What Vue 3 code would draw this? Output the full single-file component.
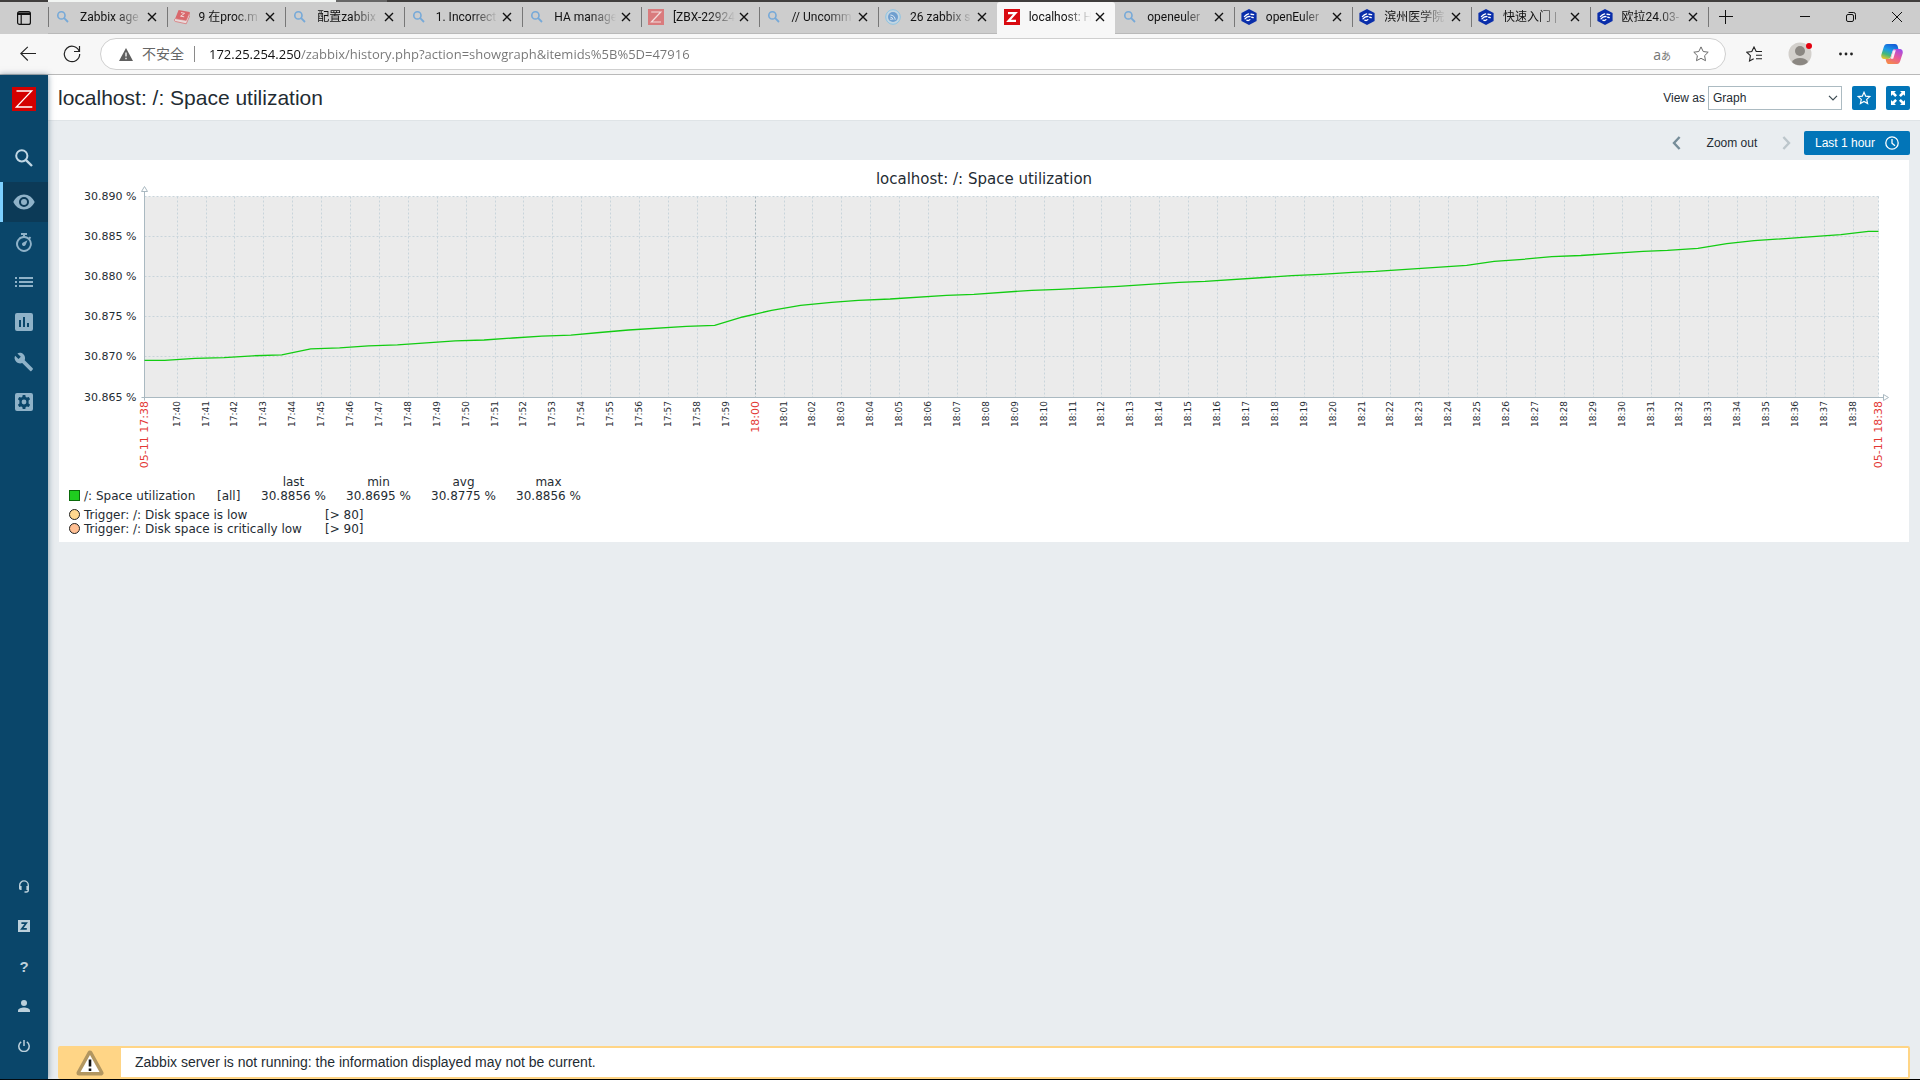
<template>
  <div class="browser">
    <div class="top-edge">
      <span class="edge-light"></span>
      <span class="edge-mid"></span>
    </div>

    <div class="tab-strip">
      <button class="tab-actions" aria-label="标签页操作">
        <svg width="16" height="16" viewBox="0 0 16 16" fill="none" stroke="#111" stroke-width="1.2">
          <rect x="1.6" y="1.6" width="12.8" height="12.8" rx="2" />
          <path d="M2 3.2h12M2 4.4h12M5.2 5v9" />
        </svg>
      </button>
      <div class="tabs">
        <div
          v-for="(tab, index) in tabs"
          :key="index"
          :class="['tab', { active: index === activeTab, plain: index === activeTab + 1 }]"
        >
          <svg v-if="tab.icon === 'search'" class="favicon" viewBox="0 0 16 16" fill="none" stroke="#76a9d8" stroke-width="1.6">
            <circle cx="6.4" cy="6.4" r="3.6" />
            <path d="M9.2 9.2l3.8 3.8" stroke-width="1.8" />
          </svg>
          <svg v-else-if="tab.icon === 'book'" class="favicon" viewBox="0 0 16 16">
            <path d="M4.6 1l11 2-3.4 8.4-11-1.8z" fill="#d9686c" />
            <path d="M1.2 9.6l11 1.8 3.4-8 .2 3.4-3.6 8-11-2.4c-1.300-.6-1-2.200 0-2.800z" fill="#e9dada" stroke="#d9686c" stroke-width=".7" />
            <path d="M7 3.600l3.600.7-4 2.900 3.600.6" fill="none" stroke="#f1d5d5" />
          </svg>
          <svg v-else-if="tab.icon === 'zdim'" class="favicon" viewBox="0 0 16 16">
            <rect width="16" height="16" fill="#d97b7d" />
            <path d="M3.200 3h9.600L3.400 13h9.600" fill="none" stroke="#f3dede" stroke-width="1.200" />
          </svg>
          <svg v-else-if="tab.icon === 'z'" class="favicon" viewBox="0 0 16 16">
            <rect width="16" height="16" fill="#d90a10" />
            <path d="M4 4.200h7.400l-6.800 7.600H12" fill="none" stroke="#fff" stroke-width="2.200" />
          </svg>
          <svg v-else-if="tab.icon === 'feed'" class="favicon" viewBox="0 0 16 16">
            <circle cx="8" cy="8" r="7.300" fill="#c4d6e2" stroke="#8cc4e4" stroke-width="1" />
            <circle cx="8" cy="8" r="5" fill="#6f9fcf" />
            <g fill="none" stroke="#dce8f3" stroke-width="1">
              <path d="M5.400 8.200a2.600 2.600 0 0 1 2.600 2.600M5.400 6a4.800 4.800 0 0 1 4.800 4.800" />
            </g>
            <circle cx="6" cy="10.200" r=".8" fill="#dce8f3" />
          </svg>
          <svg v-else class="favicon" viewBox="0 0 16 16">
            <path d="M8 0l7.600 4v8L8 16 .4 12V4z" fill="#0a2eaa" />
            <g fill="none" stroke="#fff" stroke-linecap="round">
              <path d="M3.400 7.600c1.200-1.500 2.500-2.400 4.200-2.800" stroke-width="1.300" />
              <path d="M4 9.800c1.400-1.800 3-2.600 5-2.200M5.800 11.200c1 .5 2.200.3 3-.6" stroke-width="1.300" />
              <path d="M10 5.200l2.600.4M10.800 8.300l1.400.3" stroke-width="1.400" />
            </g>
          </svg>
          <span class="tab-title">{{ tab.title }}</span>
          <button class="tab-close" :aria-label="'关闭 ' + tab.title">
            <svg width="10" height="10" viewBox="0 0 10 10" stroke="#111" stroke-width="1.400">
              <path d="M1 1l8 8M9 1l-8 8" />
            </svg>
          </button>
        </div>
      </div>
      <div class="window-area">
        <button class="new-tab" aria-label="新建标签页">
          <svg width="14" height="14" viewBox="0 0 14 14" stroke="#111" stroke-width="1">
            <path d="M0 6.500h14M6.500 0v14" />
          </svg>
        </button>
        <div class="window-buttons">
          <button aria-label="最小化">
            <svg width="10" height="10" viewBox="0 0 10 10" stroke="#111"><path d="M0 4.500h10" /></svg>
          </button>
          <button aria-label="还原">
            <svg width="10" height="10" viewBox="0 0 10 10" fill="none" stroke="#111">
              <rect x=".5" y="2.500" width="7" height="7" rx="1.500" />
              <path d="M2.500 .5h5a2 2 0 0 1 2 2v5" />
            </svg>
          </button>
          <button aria-label="关闭">
            <svg width="10" height="10" viewBox="0 0 10 10" stroke="#111"><path d="M0 0l10 10M10 0L0 10" /></svg>
          </button>
        </div>
      </div>
    </div>

    <div class="toolbar">
      <button aria-label="后退">
        <svg width="16" height="16" viewBox="0 0 16 16" fill="none" stroke="#222" stroke-width="1.100">
          <path d="M16 7.500H.8M7.800 .8L.8 7.500l7 7" />
        </svg>
      </button>
      <button aria-label="刷新">
        <svg width="18" height="18" viewBox="0 0 18 18" fill="none" stroke="#222" stroke-width="1.200">
          <path d="M16.300 6.500A7.700 7.700 0 1 0 16.700 9M16.500 1v5.500H11" />
        </svg>
      </button>
      <div class="address-bar">
        <svg width="14" height="13" viewBox="0 0 14 13">
          <path d="M7 0l7 13H0z" fill="#5f5f5f" />
          <path d="M7 4.500v4M7 9.800v1.500" stroke="#fff" stroke-width="1.300" />
        </svg>
        <span class="insecure">不安全</span>
        <input v-model="address" class="address" type="text" aria-label="地址栏">
        <span class="translate">a<small>あ</small></span>
        <button class="favorite" aria-label="收藏">
          <svg width="16" height="16" viewBox="0 0 16 16" fill="none" stroke="#6b6b6b" stroke-width="1">
            <path d="M8 .9l2.200 4.600 5 .7-3.600 3.500.9 5L8 12.300l-4.500 2.400.9-5L.8 6.200l5-.7z" />
          </svg>
        </button>
      </div>
      <div class="toolbar-buttons">
        <button aria-label="收藏夹">
          <svg width="17" height="16" viewBox="0 0 17 16" fill="none" stroke="#222" stroke-width="1.100">
            <path d="M10.500 5.500l-.3 0L8 1 5.800 5.500l-5 .7 3.600 3.500-.9 5.200 4.200-2.200M10.500 5.500H16M10 9.200h6M10 12.800h6" />
          </svg>
        </button>
        <button aria-label="用户">
          <svg width="24" height="24" viewBox="0 0 24 24">
            <circle cx="12" cy="12" r="11.500" fill="#d3d0cc" />
            <circle cx="12" cy="9" r="5" fill="#8b8782" />
            <path d="M4 20a8.500 6 0 0 1 16 0 11.500 11.500 0 0 1-16 0z" fill="#8b8782" />
            <circle cx="21" cy="4" r="3" fill="#e3000f" />
          </svg>
        </button>
        <button aria-label="更多">
          <svg width="14" height="4" viewBox="0 0 14 4" fill="#222">
            <circle cx="1.500" cy="2" r="1.400" /><circle cx="7" cy="2" r="1.400" /><circle cx="12.500" cy="2" r="1.400" />
          </svg>
        </button>
        <button aria-label="Copilot">
          <svg width="22" height="22" viewBox="0 0 22 22">
            <defs>
              <linearGradient id="cool" x1="0.600" y1="0" x2="0.200" y2="1">
                <stop offset="0" stop-color="#1560d8" /><stop offset=".4" stop-color="#1c9be8" />
                <stop offset=".7" stop-color="#44b87a" /><stop offset="1" stop-color="#e9c52c" />
              </linearGradient>
              <linearGradient id="warm" x1="0.800" y1="0" x2="0.300" y2="1">
                <stop offset="0" stop-color="#a04be8" /><stop offset=".5" stop-color="#e8589b" />
                <stop offset="1" stop-color="#f58a4b" />
              </linearGradient>
            </defs>
            <path d="M6 1h8c1.600 0 2.400 1.200 2.800 2.600L17.400 6h-3c-2 0-2.600 1-3.200 3l-1.400 4.500c-.6 1.800-1.500 2.500-3 2.500H3C.8 16-.2 14 .4 11.500L2.800 4C3.400 2 4.400 1 6 1z" fill="url(#cool)" />
            <path d="M16 21H8c-1.600 0-2.400-1.200-2.800-2.600L4.600 16h2.600c2 0 2.600-1 3.200-3l1.400-4.500C12.400 6.700 13.300 6 14.800 6H19c2.200 0 3.200 2 2.600 4.500L19.200 18c-.6 2-1.600 3-3.200 3z" fill="url(#warm)" />
            <path d="M12.300 7.200h2.500l-2.600 8.500H9.700z" fill="#fff" opacity=".9" />
          </svg>
        </button>
      </div>
    </div>

    <div class="page">
      <aside class="sidebar">
        <a class="logo" href="#" aria-label="Zabbix">
          <svg width="24" height="24" viewBox="0 0 24 24">
            <rect width="24" height="24" fill="#d40000" />
            <path d="M4.500 4h15.200L4.300 20h16" fill="none" stroke="#fff" stroke-width="1.300" />
          </svg>
        </a>
        <button class="search" aria-label="Search">
          <svg width="18" height="18" viewBox="0 0 18 18" fill="none" stroke="#c1d7e4" stroke-width="2">
            <circle cx="6.800" cy="6.800" r="5.600" />
            <path d="M10.800 10.800l6.200 6.200" stroke-width="2.400" />
          </svg>
        </button>
        <nav class="menu">
          <a v-for="item in menu" :key="item.name" href="#" :class="{ selected: item.selected }" :aria-label="item.name">
            <svg width="24" height="24" viewBox="0 0 24 24"><path :d="item.path" fill="#8fb2c8" fill-rule="evenodd" /></svg>
          </a>
        </nav>
        <nav class="menu user-menu">
          <a href="#" aria-label="Support">
            <svg width="12" height="13" viewBox="0 0 12 13">
              <path d="M1.700 7V5.200a4.300 4.300 0 0 1 8.600 0V10c0 1.400-.8 2-2 2H6.500" fill="none" stroke="#bcd0db" stroke-width="1.400" />
              <path d="M1 6h2.600v4H2.400A1.400 1.400 0 0 1 1 8.600zM11 6H8.400v4H11z" fill="#bcd0db" />
            </svg>
          </a>
          <a href="#" aria-label="Integrations">
            <svg width="12" height="12" viewBox="0 0 12 12">
              <rect width="12" height="12" fill="#bcd0db" />
              <path d="M3.400 3.200h4.800L3.800 8.900h5" fill="none" stroke="#0a466a" stroke-width="1.700" />
            </svg>
          </a>
          <a class="help" href="#" aria-label="Help">?</a>
          <a href="#" aria-label="User settings">
            <svg width="12" height="12" viewBox="0 0 12 12" fill="#bcd0db">
              <circle cx="6" cy="3" r="3" />
              <path d="M0 12v-1.400C0 8.700 3.500 7.600 6 7.600s6 1.100 6 3V12z" />
            </svg>
          </a>
          <a href="#" aria-label="Sign out">
            <svg width="12" height="12" viewBox="0 0 12 12" fill="none" stroke="#bcd0db" stroke-width="1.500">
              <path d="M3.200 1.900a5.200 5.200 0 1 0 5.600 0M6 0v6" />
            </svg>
          </a>
        </nav>
      </aside>

      <div class="content">
        <header class="header">
          <h1>localhost: /: Space utilization</h1>
          <div class="header-controls">
            <label for="view-as">View as</label>
            <div class="select-box">
              <select id="view-as" v-model="viewAs">
                <option>Graph</option>
                <option>Values</option>
                <option>500 latest values</option>
              </select>
              <svg width="10" height="6" viewBox="0 0 10 6" fill="none" stroke="#3c4a52" stroke-width="1.200"><path d="M1 .8l4 4 4-4" /></svg>
            </div>
            <button class="square-button" aria-label="Add to favorites">
              <svg width="14" height="14" viewBox="0 0 14 14" fill="none" stroke="#fff" stroke-width="1.200">
                <path d="M7 1.300l1.700 3.900 4.100.4-3.100 2.800.9 4.200L7 10.500l-3.600 2.100.9-4.200L1.200 5.600l4.100-.4z" />
              </svg>
            </button>
            <button class="square-button" aria-label="Kiosk mode">
              <svg width="14" height="14" viewBox="0 0 14 14" fill="#fff">
                <path d="M0 0h5L3.400 1.600 6 4.200 4.200 6 1.600 3.400 0 5zM14 0v5l-1.600-1.600L9.800 6 8 4.200l2.600-2.600L9 0zM0 14V9l1.600 1.600L4.200 8 6 9.800l-2.600 2.600L5 14zM14 14H9l1.600-1.600L8 9.800 9.800 8l2.600 2.600L14 9z" />
              </svg>
            </button>
          </div>
        </header>

        <main>
          <div class="time-filter">
            <button class="step" aria-label="Previous period">
              <svg width="9" height="14" viewBox="0 0 9 14" fill="none" stroke="#768d99" stroke-width="2.400"><path d="M7.600 1L2 7l5.600 6" /></svg>
            </button>
            <button class="zoom-out">Zoom out</button>
            <button class="step" aria-label="Next period" disabled>
              <svg width="9" height="14" viewBox="0 0 9 14" fill="none" stroke="#bcc6cb" stroke-width="2.400"><path d="M1.400 1L7 7l-5.600 6" /></svg>
            </button>
            <button class="period">
              Last 1 hour
              <svg width="14" height="14" viewBox="0 0 14 14" fill="none" stroke="#fff" stroke-width="1.300">
                <circle cx="7" cy="7" r="6.200" /><path d="M7 3v4.200l3 2.600" />
              </svg>
            </button>
          </div>

          <section ref="card" class="card">
            <svg class="chart" :width="width" height="315" role="img" aria-label="localhost: /: Space utilization">
              <text class="chart-title" :x="width / 2" y="24">localhost: /: Space utilization</text>
              <rect :x="left" :y="top" :width="plotWidth" :height="plotHeight" fill="#ebebeb" />
              <g class="grid">
                <path v-for="row in rows" :key="row.label" :d="`M${left} ${row.y}H${right}`" />
                <path
                  v-for="tick in ticks"
                  :key="tick.x"
                  :class="{ main: tick.main }"
                  :d="`M${tick.x} ${top}V${bottom}`"
                />
                <path :d="`M${right} ${top}V${bottom}`" />
              </g>
              <g class="axis">
                <path :d="`M${left} ${top - 5}V${bottom + 3}M${left - 3} ${bottom}H${right + 5}`" />
                <path fill="#fff" :d="`M${left - 3} ${top - 5}h6l-3 -5z`" />
                <path fill="#fff" :d="`M${right + 5} ${bottom - 3}v6l5 -3z`" />
              </g>
              <polyline class="series" :points="points" />
              <text v-for="row in rows" :key="row.label" class="y-label" :x="left - 8" :y="row.y + 3">{{ row.label }}</text>
              <text
                v-for="tick in ticks"
                :key="tick.x"
                :class="['x-label', { red: tick.main }]"
                :transform="`translate(${tick.x + (tick.main ? 3 : 2)} 241) rotate(-90)`"
              >{{ tick.label }}</text>
              <text class="x-label red" :transform="`translate(${left + 3} 241) rotate(-90)`">05-11 17:38</text>
              <text class="x-label red" :transform="`translate(${right + 3} 241) rotate(-90)`">05-11 18:38</text>
            </svg>

            <table class="legend">
              <thead>
                <tr>
                  <td class="name"></td>
                  <td class="scope"></td>
                  <th v-for="(value, key) in stats" :key="key">{{ key }}</th>
                </tr>
              </thead>
              <tbody>
                <tr>
                  <td class="name"><span class="swatch"></span>/: Space utilization</td>
                  <td class="scope">[all]</td>
                  <td v-for="(value, key) in stats" :key="key" class="value">{{ value }}</td>
                </tr>
              </tbody>
            </table>
            <table class="legend triggers">
              <tbody>
                <tr v-for="trigger in triggers" :key="trigger.name">
                  <td class="trigger-name"><span :class="['dot', trigger.severity]"></span>Trigger: {{ trigger.name }}</td>
                  <td>{{ trigger.condition }}</td>
                </tr>
              </tbody>
            </table>
          </section>

          <div class="server-warning" role="status">
            <div class="warning-icon">
              <svg width="28" height="26" viewBox="0 0 28 26">
                <path d="M14 3L25 23H3z" fill="#fff" stroke="#b29660" stroke-width="5" stroke-linejoin="round" />
                <path d="M14 5L23.500 22h-19z" fill="#fff" />
                <path d="M14 9.500v7M14 18.500v2.500" stroke="#111" stroke-width="2.600" />
              </svg>
            </div>
            <output>Zabbix server is not running: the information displayed may not be current.</output>
          </div>
        </main>
      </div>
    </div>
  </div>
</template>

<script setup>
import { ref, computed, onMounted, onUnmounted } from 'vue'

const address = ref('172.25.254.250/zabbix/history.php?action=showgraph&itemids%5B%5D=47916')
const viewAs = ref('Graph')
const activeTab = 8

const tabs = [
  { icon: 'search', title: 'Zabbix age' },
  { icon: 'book', title: '9 在proc.m' },
  { icon: 'search', title: '配置zabbix' },
  { icon: 'search', title: '1. Incorrect' },
  { icon: 'search', title: 'HA manage' },
  { icon: 'zdim', title: '[ZBX-22924' },
  { icon: 'search', title: '// Uncomm' },
  { icon: 'feed', title: '26 zabbix s' },
  { icon: 'z', title: 'localhost: H' },
  { icon: 'search', title: 'openeuler' },
  { icon: 'euler', title: 'openEuler' },
  { icon: 'euler', title: '滨州医学院' },
  { icon: 'euler', title: '快速入门 |' },
  { icon: 'euler', title: '欧拉24.03-' }
]

const menu = [
  {
    name: 'Monitoring',
    selected: true,
    path: 'M12 4.500C7.400 4.500 3.300 7.600 1.300 12c2 4.400 6.100 7.500 10.700 7.500s8.700-3.100 10.700-7.500c-2-4.400-6.100-7.500-10.700-7.500zM12 17a5 5 0 1 1 0-10 5 5 0 0 1 0 10zm0-8a3 3 0 1 0 0 6 3 3 0 0 0 0-6z'
  },
  {
    name: 'Services',
    path: 'M9 3h6v2h-2v1.100c1.400.2 2.600.7 3.700 1.500l1.200-1.200 1.300 1.300-1.100 1.300A7.900 7.900 0 1 1 11 6.100V5H9zM12 8a6 6 0 1 0 0 12 6 6 0 0 0 0-12zM15.500 10.200l-1.800 4.600a1.900 1.900 0 1 1-2.600-2.400z'
  },
  {
    name: 'Inventory',
    path: 'M3 7h2v2H3zM7 7h14v2H7zM3 11h2v2H3zM7 11h14v2H7zM3 15h2v2H3zM7 15h14v2H7z'
  },
  {
    name: 'Reports',
    path: 'M5 3h14a2 2 0 0 1 2 2v14a2 2 0 0 1-2 2H5a2 2 0 0 1-2-2V5a2 2 0 0 1 2-2zM7 10v7h2v-7zM11 7v10h2V7zM15 13v4h2v-4z'
  },
  {
    name: 'Data collection',
    path: 'M20.700 18.300l-8-8c.8-2.100.3-4.400-1.300-6C9.700 2.600 7.200 2.500 5.400 3.400l3.400 3.300-2.300 2.400L3.100 5.800c-1 1.800-.6 4.300 1.100 6 1.600 1.600 4 2 6 1.200l8 8c.3.400.9.400 1.200 0l1.300-1.500c.4-.3.4-.8 0-1.200z'
  },
  {
    name: 'Administration',
    path: 'M5 3h14a2 2 0 0 1 2 2v14a2 2 0 0 1-2 2H5a2 2 0 0 1-2-2V5a2 2 0 0 1 2-2zM10.700 5l-.4 1.900-1.200.7-1.900-.7-1.300 2.300 1.500 1.300v3l-1.500 1.300 1.300 2.300 1.900-.7 1.200.7.4 1.900h2.600l.4-1.900 1.200-.7 1.900.7 1.300-2.300-1.500-1.300v-3l1.500-1.300-1.300-2.300-1.900.7-1.200-.7-.4-1.900zM12 9.600a2.400 2.400 0 1 1 0 4.800 2.400 2.400 0 0 1 0-4.800z'
  }
]

const stats = { last: '30.8856 %', min: '30.8695 %', avg: '30.8775 %', max: '30.8856 %' }

const triggers = [
  { name: '/: Disk space is low', condition: '[> 80]', severity: 'warning' },
  { name: '/: Disk space is critically low', condition: '[> 90]', severity: 'average' }
]

// [minutes since 17:38:52, used space in %]
const history = [
  [0, 30.86963], [0.7, 30.86963], [1.75, 30.86988], [2.75, 30.86996], [3.75, 30.87019], [4.75, 30.87031],
  [5.75, 30.87106], [6.75, 30.87118], [7.75, 30.87143], [8.75, 30.87155], [9.75, 30.8718], [10.75, 30.87204],
  [11.75, 30.87215], [12.75, 30.8724], [13.75, 30.87264], [14.75, 30.87275], [15.75, 30.87308], [16.75, 30.8734],
  [18.75, 30.87386], [19.73, 30.87398], [20.7, 30.87501], [21.7, 30.87585], [22.7, 30.87647], [23.77, 30.87684],
  [24.7, 30.87709], [25.8, 30.87725], [27.75, 30.87771], [28.7, 30.87784], [30.7, 30.87833], [31.65, 30.87846],
  [33.7, 30.87883], [35.8, 30.87933], [36.7, 30.87945], [39.7, 30.88015], [40.7, 30.88032], [41.8, 30.88057],
  [42.6, 30.88068], [45.75, 30.88144], [46.7, 30.88194], [47.7, 30.88219], [48.7, 30.88251], [49.7, 30.88266],
  [51.85, 30.88318], [52.7, 30.88331], [53.75, 30.88356], [54.75, 30.88413], [55.7, 30.8845], [58.7, 30.88525],
  [59.65, 30.88567], [60, 30.88567]
]

const card = ref(null)
const width = ref(1850)

const left = 85.5
const top = 36.5
const bottom = 237.5
const plotHeight = bottom - top
const right = computed(() => width.value - 30.5)
const plotWidth = computed(() => right.value - left)

const xAt = minutes => left + (minutes / 60) * plotWidth.value
const yAt = value => top + ((30.89 - value) / 0.025) * plotHeight

const points = computed(() => history.map(([m, v]) => `${xAt(m).toFixed(1)},${yAt(v).toFixed(1)}`).join(' '))

const labels = ['30.890 %', '30.885 %', '30.880 %', '30.875 %', '30.870 %', '30.865 %']
const rows = labels.map((label, i) => ({
  label,
  y: i === labels.length - 1 ? bottom : top + i * 40
}))

const ticks = computed(() => {
  const list = []
  for (let i = 0; i < 59; i++) {
    const total = 17 * 60 + 40 + i
    list.push({
      x: Math.floor(xAt(i + 1.13)) + 0.5,
      main: total % 60 === 0,
      label: `${Math.floor(total / 60)}:${String(total % 60).padStart(2, '0')}`
    })
  }
  return list
})

const measure = () => {
  width.value = card.value.clientWidth
}

onMounted(() => {
  measure()
  window.addEventListener('resize', measure)
})

onUnmounted(() => {
  window.removeEventListener('resize', measure)
})
</script>

<style>
body {
  margin: 0;
  background: #e9edf0;
}
</style>

<style scoped>
.browser {
  display: flex;
  flex-direction: column;
  min-height: 100vh;
  box-sizing: border-box;
  border-bottom: 1px solid #000;
  font-family: Arial, "Liberation Sans", sans-serif;
  font-size: 12px;
  color: #1f2c33;
}

button {
  display: flex;
  align-items: center;
  justify-content: center;
  padding: 0;
  border: 0;
  background: none;
  font: inherit;
  color: inherit;
  cursor: pointer;
}

svg {
  flex: none;
}

.top-edge {
  display: flex;
  height: 2px;
  padding-left: 48px;
  background: #403e3d;
}

.edge-light {
  width: 288px;
  background: #f2f5f3;
}

.edge-mid {
  width: 51px;
  background: #666;
}

.tab-strip {
  display: flex;
  height: 32px;
  background: #cdcdcd;
  font-family: Roboto, "Noto Sans CJK SC", sans-serif;
  color: #111;
}

.tab-actions {
  width: 48px;
}

.tabs {
  display: flex;
  flex: 1;
  min-width: 0;
}

.tab {
  display: flex;
  flex: 1 1 0;
  align-items: center;
  min-width: 0;
  box-sizing: border-box;
  padding: 0 10px 2px 7px;
  border-bottom: 1px solid #b9b9b9;
  background: linear-gradient(#777, #777) 0 5px / 1px 20px no-repeat;
}

.tab.plain {
  background: none;
}

.tab.active {
  border-bottom-color: #f7f7f7;
  border-radius: 3px 3px 0 0;
  background: #f7f7f7;
}

.favicon {
  width: 16px;
  height: 16px;
}

.tab-title {
  flex: 1;
  min-width: 0;
  margin: 0 4px 0 9px;
  overflow: hidden;
  white-space: nowrap;
  line-height: 20px;
  mask-image: linear-gradient(to right, #000 36px, transparent 62px);
}

.tab-close {
  width: 10px;
  height: 20px;
}

.window-area {
  display: flex;
  justify-content: space-between;
  width: 212px;
  padding-bottom: 2px;
  box-sizing: border-box;
  border-bottom: 1px solid #b9b9b9;
  background: linear-gradient(#777, #777) 0 5px / 1px 20px no-repeat;
}

.new-tab {
  width: 36px;
}

.window-buttons {
  display: flex;
}

.window-buttons button {
  width: 46px;
}

.toolbar {
  display: flex;
  align-items: center;
  height: 40px;
  padding: 0 5px 0 6px;
  border-bottom: 1px solid #b9b9b9;
  background: #f7f7f7;
}

.toolbar > button {
  width: 44px;
  height: 32px;
}

.address-bar {
  display: flex;
  flex: 1;
  align-items: center;
  height: 32px;
  margin: 0 5px 0 6px;
  padding: 0 16px 0 18px;
  box-sizing: border-box;
  border: 1px solid #cfcfcf;
  border-radius: 16px;
  background: #fff;
  font-family: "Open Sans", "Noto Sans CJK SC", sans-serif;
  font-size: 13px;
}

.insecure {
  margin-left: 9px;
  padding-right: 10px;
  border-right: 1px solid #8a8a8a;
  font-size: 14px;
  line-height: 16px;
  color: #666;
}

.address {
  flex: 1;
  min-width: 0;
  margin-left: 14px;
  padding: 0;
  border: 0;
  outline: 0;
  font: inherit;
  /* the host stands out from the path */
  background: linear-gradient(to right, #111 92px, #757575 92px);
  background-clip: text;
  color: transparent;
  caret-color: #111;
}

.translate {
  font-size: 14px;
  color: #757575;
}

.translate small {
  font-size: 10px;
}

.favorite {
  margin-left: 22px;
}

.toolbar-buttons {
  display: flex;
}

.toolbar-buttons button {
  width: 46px;
  height: 32px;
}

.page {
  display: flex;
  flex: 1;
}

.sidebar {
  display: flex;
  flex-direction: column;
  align-items: center;
  width: 48px;
  padding: 12px 0 13px;
  box-sizing: border-box;
  background: #0a466a;
  box-shadow: 0 0 6px rgba(10, 50, 80, 0.5);
  z-index: 1;
}

.logo {
  height: 24px;
}

.search {
  width: 48px;
  height: 48px;
  margin: 23px 0 0;
}

.menu {
  display: flex;
  flex-direction: column;
  align-self: stretch;
}

.menu a {
  display: flex;
  align-items: center;
  justify-content: center;
  height: 40px;
  box-sizing: border-box;
  color: #bcd0db;
  text-decoration: none;
}

.menu a.selected {
  padding-right: 3px;
  border-left: 3px solid #7dd0ff;
  background: #0c3a57;
}

.user-menu {
  margin-top: auto;
}

.menu .help {
  font-size: 15px;
  font-weight: bold;
}

.content {
  display: flex;
  flex: 1;
  flex-direction: column;
  min-width: 0;
  background: #e9edf0;
}

.header {
  display: flex;
  align-items: center;
  justify-content: space-between;
  height: 45px;
  padding: 0 10px;
  border-bottom: 1px solid #dfe4e7;
  background: #fff;
}

h1 {
  margin: 0;
  font-size: 21px;
  font-weight: normal;
}

.header-controls {
  display: flex;
  align-items: center;
}

.select-box {
  position: relative;
  width: 134px;
  height: 24px;
  margin-left: 3px;
}

.select-box select {
  width: 100%;
  height: 100%;
  padding: 0 5px 0 4px;
  border: 1px solid #acbbc2;
  border-radius: 0;
  background: #fff;
  font: inherit;
  color: inherit;
  appearance: none;
}

.select-box svg {
  position: absolute;
  top: 9px;
  right: 4px;
  pointer-events: none;
}

.square-button {
  width: 24px;
  height: 24px;
  margin-left: 10px;
  border-radius: 2px;
  background: #0275b8;
}

main {
  display: flex;
  flex: 1;
  flex-direction: column;
  padding: 10px 10px 0;
}

.time-filter {
  display: flex;
  align-items: center;
  justify-content: flex-end;
  height: 24px;
}

.step {
  width: 24px;
  height: 24px;
}

.zoom-out {
  width: 86px;
  height: 24px;
}

.period {
  gap: 10px;
  height: 24px;
  margin-left: 5px;
  padding: 0 11px;
  border-radius: 2px;
  background: #0275b8;
  color: #fff;
}

.card {
  margin: 5px 1px 10px;
  padding-bottom: 6px;
  background: #fff;
  font-family: "DejaVu Sans", sans-serif;
}

.chart {
  display: block;
}

.chart text {
  fill: #1f2c33;
}

.chart .chart-title {
  font-size: 15px;
  text-anchor: middle;
}

.chart .y-label {
  font-size: 11px;
  text-anchor: end;
}

.chart .x-label {
  font-size: 9px;
  text-anchor: end;
}

.chart .x-label.red {
  font-size: 11px;
  fill: #e33734;
}

.grid path {
  fill: none;
  stroke: #c8d4db;
  stroke-dasharray: 2 2;
}

.grid path.main {
  stroke: #a3b2b9;
}

.axis path {
  stroke: #aab9c1;
}

.series {
  fill: none;
  stroke: #12cc12;
  stroke-width: 1.3px;
}

.legend {
  margin-left: 10px;
  border-collapse: collapse;
  font-size: 12px;
  line-height: 14px;
  white-space: nowrap;
}

.legend th,
.legend td {
  height: 14px;
  padding: 0;
  font-weight: normal;
}

.legend th,
.legend .value {
  width: 85px;
  text-align: center;
}

.legend .name {
  width: 148px;
}

.legend .scope {
  width: 34px;
}

.triggers {
  margin-top: 5px;
}

.trigger-name {
  width: 256px;
}

.swatch,
.dot {
  display: inline-block;
  width: 11px;
  height: 11px;
  margin-right: 4px;
  box-sizing: border-box;
  border: 1px solid #2c3c2c;
  vertical-align: -1px;
}

.swatch {
  border-color: #0a6a0a;
  background: #1fcc1f;
}

.dot {
  border-color: #222;
  border-radius: 50%;
}

.dot.warning {
  background: #ffd98f;
}

.dot.average {
  background: #ffbf93;
}

.server-warning {
  display: flex;
  height: 33px;
  margin-top: auto;
  box-sizing: border-box;
  border: 2px solid #ffd586;
  border-radius: 2px;
  background: #fff;
}

.warning-icon {
  display: flex;
  align-items: center;
  justify-content: center;
  width: 61px;
  box-sizing: border-box;
  padding-right: 2px;
  background: #ffd586;
}

output {
  padding-left: 14px;
  font-size: 14px;
  line-height: 29px;
}
</style>
